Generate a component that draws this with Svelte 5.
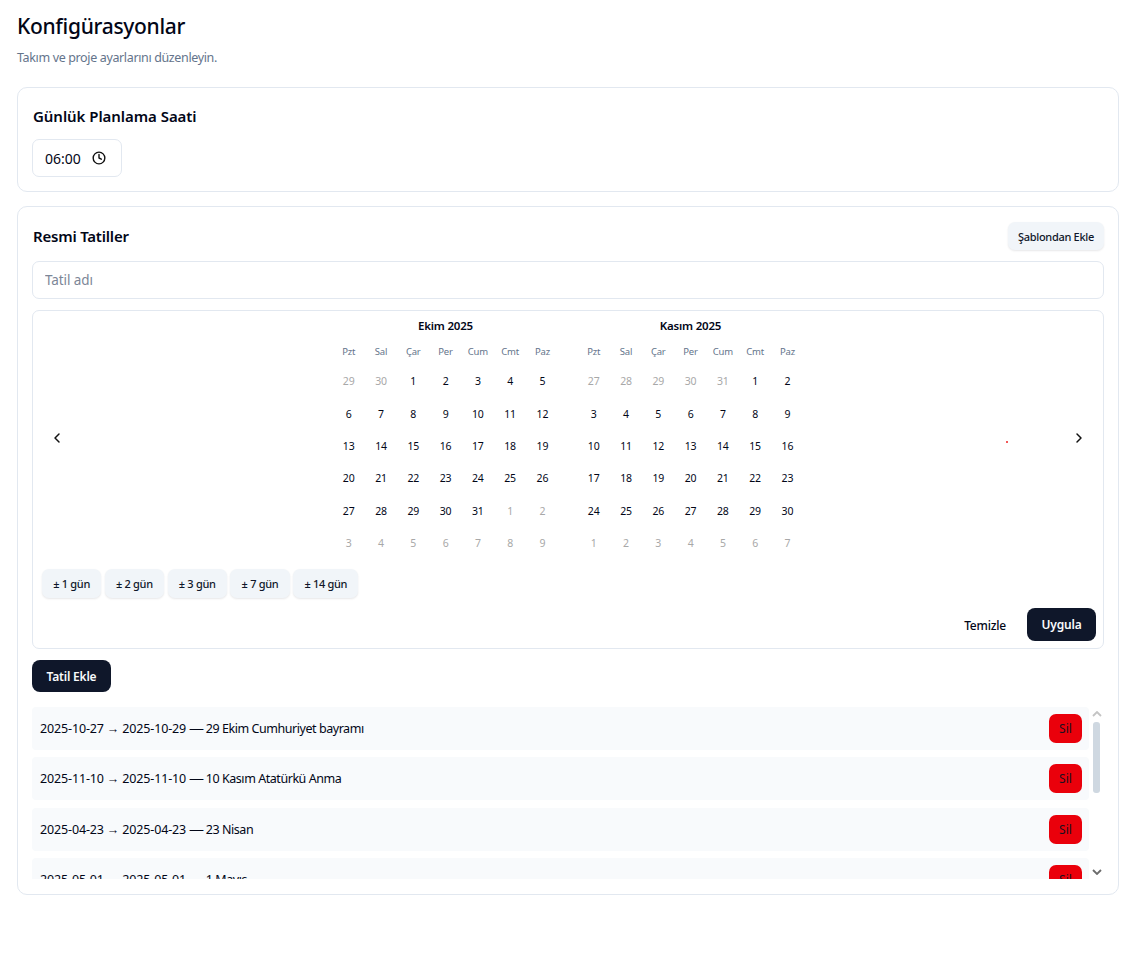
<script>
	const weekdays = ['Pzt', 'Sal', 'Çar', 'Per', 'Cum', 'Cmt', 'Paz'];

	// lead/trail = önceki ve sonraki aydan gelen soluk hücreler
	function buildDays(prevEnd, lead, total, trail) {
		const days = [];
		for (let i = prevEnd - lead + 1; i <= prevEnd; i++) days.push({ n: i, muted: true });
		for (let i = 1; i <= total; i++) days.push({ n: i, muted: false });
		for (let i = 1; i <= trail; i++) days.push({ n: i, muted: true });
		return days;
	}

	const months = [
		{ title: 'Ekim 2025', days: buildDays(30, 2, 31, 9) },
		{ title: 'Kasım 2025', days: buildDays(31, 5, 30, 7) }
	];

	const presets = ['± 1 gün', '± 2 gün', '± 3 gün', '± 7 gün', '± 14 gün'];

	const holidays = [
		{ from: '2025-10-27', to: '2025-10-29', name: '29 Ekim Cumhuriyet bayramı' },
		{ from: '2025-11-10', to: '2025-11-10', name: '10 Kasım Atatürkü Anma' },
		{ from: '2025-04-23', to: '2025-04-23', name: '23 Nisan' },
		{ from: '2025-05-01', to: '2025-05-01', name: '1 Mayıs' }
	];
</script>

<div class="page">
	<h1>Konfigürasyonlar</h1>
	<p class="subtitle">Takım ve proje ayarlarını düzenleyin.</p>

	<section class="card first">
		<h2>Günlük Planlama Saati</h2>
		<div class="time-input">
			<span>06:00</span>
			<svg width="14" height="14" viewBox="0 0 24 24" fill="none" stroke="#111" stroke-width="2.4" stroke-linecap="round" stroke-linejoin="round">
				<circle cx="12" cy="12" r="10" />
				<path d="M12 6v6l4 2" />
			</svg>
		</div>
	</section>

	<section class="card">
		<div class="head">
			<h2 class="tight">Resmi Tatiller</h2>
			<button type="button" class="soft template">Şablondan Ekle</button>
		</div>

		<input class="name-input" placeholder="Tatil adı" />

		<div class="calendar">
			<div class="cal-main">
				<button type="button" class="nav" aria-label="Önceki">
					<svg width="16" height="16" viewBox="0 0 24 24" fill="none" stroke="#111" stroke-width="2.2" stroke-linecap="round" stroke-linejoin="round"><path d="M15 6l-6 6 6 6" /></svg>
				</button>
				<div class="months">
					{#each months as month (month.title)}
						<div class="month">
							<div class="month-title">{month.title}</div>
							<div class="grid">
								{#each weekdays as d (d)}
									<div class="wd">{d}</div>
								{/each}
								{#each month.days as day, i (i)}
									<div class="day" class:muted={day.muted}>{day.n}</div>
								{/each}
							</div>
						</div>
					{/each}
				</div>
				<button type="button" class="nav" aria-label="Sonraki">
					<svg width="16" height="16" viewBox="0 0 24 24" fill="none" stroke="#111" stroke-width="2.2" stroke-linecap="round" stroke-linejoin="round"><path d="M9 6l6 6-6 6" /></svg>
				</button>
				<span class="dot"></span>
			</div>

			<div class="presets">
				{#each presets as p (p)}
					<button type="button" class="soft preset">{p}</button>
				{/each}
			</div>

			<div class="cal-actions">
				<button type="button" class="ghost">Temizle</button>
				<button type="button" class="dark apply">Uygula</button>
			</div>
		</div>

		<button type="button" class="dark add">Tatil Ekle</button>

		<div class="list-wrap">
			<div class="list">
				{#each holidays as h (h.name)}
					<div class="row">
						<span><span class="dates">{h.from} → {h.to} <span class="dash">—</span></span> <span class="hname">{h.name}</span></span>
						<button type="button" class="del">Sil</button>
					</div>
				{/each}
			</div>
			<div class="scrollbar">
				<svg class="arrow" width="10" height="6" viewBox="0 0 10 6" fill="none" stroke="#c4c4c4" stroke-width="1.8"><path d="M1 5l4-4 4 4" /></svg>
				<div class="thumb"></div>
				<svg class="arrow down" width="10" height="6" viewBox="0 0 10 6" fill="none" stroke="#6b6b6b" stroke-width="1.8"><path d="M1 1l4 4 4-4" /></svg>
			</div>
		</div>
	</section>
</div>

<style>
	:global(body) {
		background: #fff;
		font-family: 'Noto Sans', 'Open Sans', sans-serif;
		color: #020617;
	}
	.page {
		padding: 11px 13px 66px 17px;
	}
	h1 {
		margin: 0;
		font-size: 21px;
		line-height: 30px;
		font-weight: 500;
		letter-spacing: -0.3px;
	}
	.subtitle {
		margin: 7px 0 0;
		font-size: 12.5px;
		line-height: 20px;
		letter-spacing: -0.36px;
		color: #64748b;
	}
	.card {
		border: 1px solid #e2e8f0;
		border-radius: 10px;
		padding: 14px 14px 0;
		background: #fff;
		height: 689px;
		box-sizing: border-box;
		margin-top: 14px;
	}
	.card.first {
		height: 105px;
		margin-top: 19px;
		padding-top: 17px;
	}
	h2 {
		margin: 0;
		padding-left: 1px;
		font-size: 15px;
		line-height: 22px;
		font-weight: 600;
		letter-spacing: -0.05px;
	}
	h2.tight {
		letter-spacing: -0.2px;
	}
	.time-input {
		margin-top: 12px;
		width: 90px;
		height: 38px;
		box-sizing: border-box;
		border: 1px solid #e2e8f0;
		border-radius: 7px;
		display: flex;
		align-items: center;
		padding-left: 12px;
		gap: 11px;
		font-size: 14px;
	}
	.head {
		display: flex;
		justify-content: space-between;
		align-items: center;
		height: 30px;
	}
	button {
		font-family: inherit;
		border: none;
		cursor: pointer;
		padding: 0;
	}
	.soft {
		background: #f1f5f9;
		color: #0f172a;
		border-radius: 7px;
		box-shadow: 0 1px 2px rgba(15, 23, 42, 0.1);
		font-weight: 500;
		font-size: 11px;
		letter-spacing: -0.3px;
	}
	.template {
		width: 96px;
		height: 28px;
	}
	.name-input {
		display: block;
		width: 100%;
		height: 38px;
		box-sizing: border-box;
		margin-top: 10px;
		border: 1px solid #e2e8f0;
		border-radius: 7px;
		padding: 0 12px;
		font-family: inherit;
		font-size: 13.5px;
		letter-spacing: -0.1px;
		outline: none;
	}
	.name-input::placeholder {
		color: #7c8697;
	}
	.calendar {
		margin-top: 11px;
		height: 339px;
		box-sizing: border-box;
		border: 1px solid #e2e8f0;
		border-radius: 7px;
		padding: 7px 7px 7px 8px;
		display: flex;
		flex-direction: column;
	}
	.cal-main {
		position: relative;
		display: flex;
		align-items: center;
		justify-content: space-between;
		height: 248px;
		padding: 0 9px 0 8px;
	}
	.nav {
		width: 16px;
		height: 16px;
		background: none;
		display: flex;
		margin-top: -4px;
	}
	.dot {
		position: absolute;
		left: 965px;
		top: 123px;
		width: 2px;
		height: 2px;
		border-radius: 50%;
		background: #ef2020;
	}
	.months {
		display: flex;
		gap: 19px;
		align-self: flex-start;
	}
	.month {
		width: 226px;
	}
	.month-title {
		height: 18px;
		line-height: 18px;
		margin: -1px 0 1px;
		text-align: center;
		font-size: 11.5px;
		font-weight: 600;
		letter-spacing: -0.2px;
	}
	.grid {
		display: grid;
		grid-template-columns: repeat(7, 32.3px);
		grid-template-rows: 29.3px repeat(6, 32.3px);
	}
	.wd {
		display: flex;
		align-items: center;
		justify-content: center;
		padding-top: 1px;
		font-size: 9.5px;
		letter-spacing: -0.2px;
		color: #64748b;
	}
	.day {
		display: flex;
		align-items: center;
		justify-content: center;
		font-size: 10.5px;
		letter-spacing: -0.2px;
		color: #020617;
	}
	.day.muted {
		color: #a8a8a8;
	}
	.presets {
		display: flex;
		gap: 3.6px;
		height: 29px;
		margin-top: 7px;
		padding-left: 1px;
	}
	.preset {
		height: 29px;
		padding: 0 11.2px;
		white-space: nowrap;
	}
	.cal-actions {
		display: flex;
		justify-content: flex-end;
		align-items: center;
		gap: 21px;
		margin-top: 10px;
		height: 33px;
	}
	.ghost {
		background: none;
		padding-top: 1px;
		font-size: 12px;
		font-weight: 500;
		letter-spacing: -0.2px;
		color: #020617;
	}
	.dark {
		background: #0f172a;
		color: #f8fafc;
		border-radius: 8px;
		font-size: 12px;
		font-weight: 600;
		letter-spacing: -0.2px;
	}
	.apply {
		width: 69px;
		height: 33px;
	}
	.add {
		display: block;
		margin-top: 11px;
		width: 79px;
		height: 32px;
	}
	.list-wrap {
		margin-top: 15px;
		display: flex;
		height: 172px;
	}
	.list {
		flex: 1;
		overflow: hidden;
		display: flex;
		flex-direction: column;
		gap: 7.3px;
	}
	.row {
		flex: none;
		height: 43px;
		box-sizing: border-box;
		background: #f8fafc;
		border-radius: 4px;
		display: flex;
		align-items: center;
		justify-content: space-between;
		padding: 0 7px 0 8px;
		font-size: 12.5px;
	}
	.dates {
		letter-spacing: -0.15px;
	}
	.dash {
		display: inline-block;
		transform: scaleX(1.2);
		transform-origin: left center;
	}
	.hname {
		margin-left: 1px;
		letter-spacing: -0.45px;
	}
	.del {
		width: 33px;
		height: 29px;
		border-radius: 7px;
		background: #ea000b;
		color: #1a1020;
		font-size: 12px;
	}
	.scrollbar {
		position: relative;
		width: 15px;
		flex: none;
	}
	.arrow {
		position: absolute;
		left: 3px;
		top: 4px;
	}
	.arrow.down {
		top: 162px;
	}
	.thumb {
		position: absolute;
		left: 4px;
		top: 15px;
		width: 7px;
		height: 71px;
		border-radius: 3px;
		background: #cfd8e1;
	}
</style>
